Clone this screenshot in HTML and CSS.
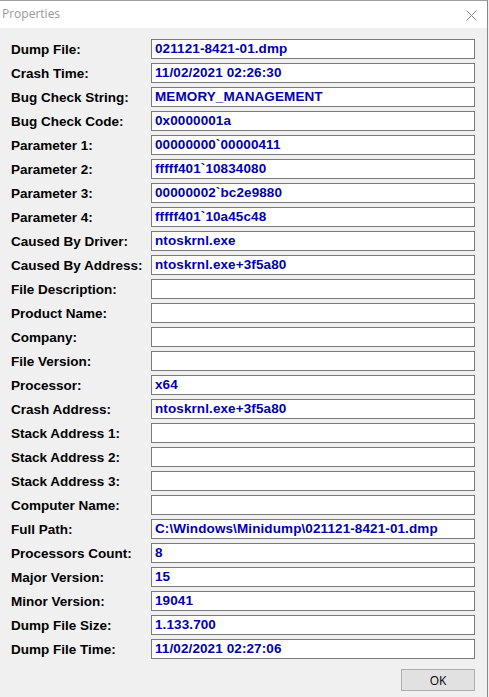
FILE: index.html
```html
<!DOCTYPE html>
<html>
<head>
<meta charset="utf-8">
<link rel="stylesheet" href="styles.css">
</head>
<body>
<div class="window">
  <div class="titlebar">
    <span class="title">Properties</span>
    <svg class="close" width="11" height="11" viewBox="0 0 11 11"><path d="M0.5 0.5 L10.5 10.5 M10.5 0.5 L0.5 10.5" stroke="#8a8a8a" stroke-width="1" fill="none"/></svg>
  </div>
  <div class="content">
    <div class="grid">
      <div class="label">Dump File:</div><div class="field">021121-8421-01.dmp</div>
      <div class="label">Crash Time:</div><div class="field">11/02/2021 02:26:30</div>
      <div class="label">Bug Check String:</div><div class="field">MEMORY_MANAGEMENT</div>
      <div class="label">Bug Check Code:</div><div class="field">0x0000001a</div>
      <div class="label">Parameter 1:</div><div class="field">00000000`00000411</div>
      <div class="label">Parameter 2:</div><div class="field">fffff401`10834080</div>
      <div class="label">Parameter 3:</div><div class="field">00000002`bc2e9880</div>
      <div class="label">Parameter 4:</div><div class="field">fffff401`10a45c48</div>
      <div class="label">Caused By Driver:</div><div class="field">ntoskrnl.exe</div>
      <div class="label">Caused By Address:</div><div class="field">ntoskrnl.exe+3f5a80</div>
      <div class="label">File Description:</div><div class="field"></div>
      <div class="label">Product Name:</div><div class="field"></div>
      <div class="label">Company:</div><div class="field"></div>
      <div class="label">File Version:</div><div class="field"></div>
      <div class="label">Processor:</div><div class="field">x64</div>
      <div class="label">Crash Address:</div><div class="field">ntoskrnl.exe+3f5a80</div>
      <div class="label">Stack Address 1:</div><div class="field"></div>
      <div class="label">Stack Address 2:</div><div class="field"></div>
      <div class="label">Stack Address 3:</div><div class="field"></div>
      <div class="label">Computer Name:</div><div class="field"></div>
      <div class="label">Full Path:</div><div class="field">C:\Windows\Minidump\021121-8421-01.dmp</div>
      <div class="label">Processors Count:</div><div class="field">8</div>
      <div class="label">Major Version:</div><div class="field">15</div>
      <div class="label">Minor Version:</div><div class="field">19041</div>
      <div class="label">Dump File Size:</div><div class="field">1.133.700</div>
      <div class="label">Dump File Time:</div><div class="field">11/02/2021 02:27:06</div>
    </div>
    <div class="buttons">
      <div class="btn">OK</div>
    </div>
  </div>
</div>
</body>
</html>
```
FILE: styles.css
```css
html, body {
  margin: 0;
  padding: 0;
  background: #f0f0f0;
}
body {
  width: 489px;
  height: 697px;
  overflow: hidden;
}
.window {
  width: 487px;
  height: 696px;
  border-top: 1px solid #a0a0a0;
  border-right: 1px solid #888888;
  background: #f0f0f0;
}
.titlebar {
  height: 27px;
  background: #ffffff;
  display: flex;
  align-items: center;
  justify-content: space-between;
  padding: 0 10px 0 2px;
}
.title {
  font-family: "Open Sans", "Noto Sans", sans-serif;
  font-size: 12px;
  color: #999999;
  margin-top: -2px;
}
.close {
  display: block;
  margin-top: 1px;
}
.content {
  padding: 11px 0 0 11px;
}
.grid {
  display: grid;
  grid-template-columns: 140px 324px;
  grid-auto-rows: 20px;
  row-gap: 4px;
  align-items: center;
}
.label {
  font-family: "Liberation Sans", Arial, sans-serif;
  font-weight: bold;
  font-size: 13.5px;
  color: #000000;
  white-space: nowrap;
}
.field {
  box-sizing: border-box;
  height: 20px;
  border: 1px solid #7a7a7a;
  background: #ffffff;
  font-family: "Liberation Sans", Arial, sans-serif;
  font-weight: bold;
  font-size: 13.5px;
  letter-spacing: 0.1px;
  color: #0000b4;
  padding-left: 3px;
  line-height: 18px;
  white-space: nowrap;
  overflow: hidden;
}
.buttons {
  display: flex;
  justify-content: flex-end;
  width: 464px;
  margin-top: 10px;
}
.btn {
  box-sizing: border-box;
  width: 74px;
  height: 22px;
  border: 1px solid #adadad;
  background: #e1e1e1;
  font-family: "Open Sans", "Noto Sans", sans-serif;
  font-size: 12px;
  color: #000000;
  display: flex;
  align-items: center;
  justify-content: center;
}
```
